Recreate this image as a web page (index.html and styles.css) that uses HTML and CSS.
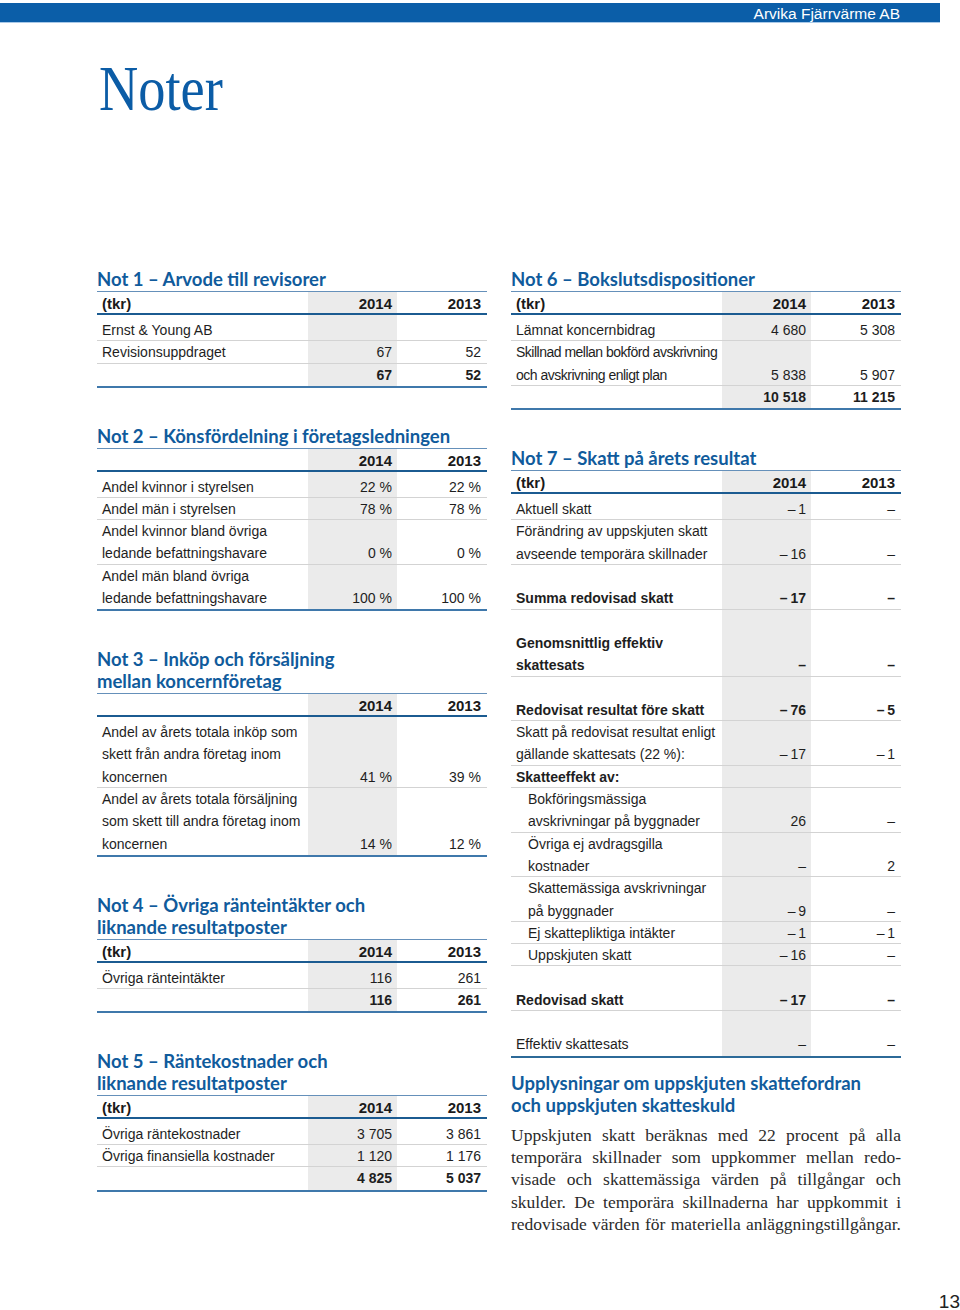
FILE: index.html
```html
<!DOCTYPE html>
<html lang="sv">
<head>
<meta charset="utf-8">
<title>Noter – Arvika Fjärrvärme AB</title>
<link rel="stylesheet" href="styles.css">
</head>
<body>
<header class="topbar"><span class="company">Arvika Fjärrvärme AB</span></header>
<h1 class="title">Noter</h1>
<main class="cols">
  <div class="col">
    <section class="note">
      <h2>Not 1 – Arvode till revisorer</h2>
      <table class="nt">
        <colgroup><col class="c-l"><col class="c-a"><col class="c-b"></colgroup>
        <thead><tr><th class="l">(tkr)</th><th class="a">2014</th><th class="b">2013</th></tr></thead>
        <tbody>
          <tr class="sp"><td></td><td class="a"></td><td></td></tr>
          <tr><td class="l">Ernst &amp; Young AB</td><td class="a"></td><td class="b"></td></tr>
          <tr><td class="l">Revisionsuppdraget</td><td class="a">67</td><td class="b">52</td></tr>
          <tr class="bold"><td class="l">&nbsp;</td><td class="a">67</td><td class="b">52</td></tr>
        </tbody>
      </table>
    </section>

    <section class="note">
      <h2>Not 2 – Könsfördelning i företagsledningen</h2>
      <table class="nt">
        <colgroup><col class="c-l"><col class="c-a"><col class="c-b"></colgroup>
        <thead><tr><th class="l"></th><th class="a">2014</th><th class="b">2013</th></tr></thead>
        <tbody>
          <tr class="sp"><td></td><td class="a"></td><td></td></tr>
          <tr><td class="l">Andel kvinnor i styrelsen</td><td class="a">22 %</td><td class="b">22 %</td></tr>
          <tr><td class="l">Andel män i styrelsen</td><td class="a">78 %</td><td class="b">78 %</td></tr>
          <tr><td class="l">Andel kvinnor bland övriga<br>ledande befattningshavare</td><td class="a">0 %</td><td class="b">0 %</td></tr>
          <tr><td class="l">Andel män bland övriga<br>ledande befattningshavare</td><td class="a">100 %</td><td class="b">100 %</td></tr>
        </tbody>
      </table>
    </section>

    <section class="note">
      <h2>Not 3 – Inköp och försäljning<br>mellan koncernföretag</h2>
      <table class="nt">
        <colgroup><col class="c-l"><col class="c-a"><col class="c-b"></colgroup>
        <thead><tr><th class="l"></th><th class="a">2014</th><th class="b">2013</th></tr></thead>
        <tbody>
          <tr class="sp"><td></td><td class="a"></td><td></td></tr>
          <tr><td class="l">Andel av årets totala inköp som<br>skett från andra företag inom<br>koncernen</td><td class="a">41 %</td><td class="b">39 %</td></tr>
          <tr><td class="l">Andel av årets totala försäljning<br>som skett till andra företag inom<br>koncernen</td><td class="a">14 %</td><td class="b">12 %</td></tr>
        </tbody>
      </table>
    </section>

    <section class="note">
      <h2>Not 4 – Övriga ränteintäkter och<br>liknande resultatposter</h2>
      <table class="nt">
        <colgroup><col class="c-l"><col class="c-a"><col class="c-b"></colgroup>
        <thead><tr><th class="l">(tkr)</th><th class="a">2014</th><th class="b">2013</th></tr></thead>
        <tbody>
          <tr class="sp"><td></td><td class="a"></td><td></td></tr>
          <tr><td class="l">Övriga ränteintäkter</td><td class="a">116</td><td class="b">261</td></tr>
          <tr class="bold"><td class="l">&nbsp;</td><td class="a">116</td><td class="b">261</td></tr>
        </tbody>
      </table>
    </section>

    <section class="note">
      <h2>Not 5 – Räntekostnader och<br>liknande resultatposter</h2>
      <table class="nt">
        <colgroup><col class="c-l"><col class="c-a"><col class="c-b"></colgroup>
        <thead><tr><th class="l">(tkr)</th><th class="a">2014</th><th class="b">2013</th></tr></thead>
        <tbody>
          <tr class="sp"><td></td><td class="a"></td><td></td></tr>
          <tr><td class="l">Övriga räntekostnader</td><td class="a">3 705</td><td class="b">3 861</td></tr>
          <tr><td class="l">Övriga finansiella kostnader</td><td class="a">1 120</td><td class="b">1 176</td></tr>
          <tr class="bold"><td class="l">&nbsp;</td><td class="a">4 825</td><td class="b">5 037</td></tr>
        </tbody>
      </table>
    </section>
  </div>

  <div class="col col-r">
    <section class="note">
      <h2>Not 6 – Bokslutsdispositioner</h2>
      <table class="nt">
        <colgroup><col class="c-l"><col class="c-a"><col class="c-b"></colgroup>
        <thead><tr><th class="l">(tkr)</th><th class="a">2014</th><th class="b">2013</th></tr></thead>
        <tbody>
          <tr class="sp"><td></td><td class="a"></td><td></td></tr>
          <tr><td class="l">Lämnat koncernbidrag</td><td class="a">4 680</td><td class="b">5 308</td></tr>
          <tr><td class="l tight">Skillnad mellan bokförd avskrivning<br>och avskrivning enligt plan</td><td class="a">5 838</td><td class="b">5 907</td></tr>
          <tr class="bold"><td class="l">&nbsp;</td><td class="a">10 518</td><td class="b">11 215</td></tr>
        </tbody>
      </table>
    </section>

    <section class="note">
      <h2>Not 7 – Skatt på årets resultat</h2>
      <table class="nt nt-dark">
        <colgroup><col class="c-l"><col class="c-a"><col class="c-b"></colgroup>
        <thead><tr><th class="l">(tkr)</th><th class="a">2014</th><th class="b">2013</th></tr></thead>
        <tbody>
          <tr class="sp"><td></td><td class="a"></td><td></td></tr>
          <tr><td class="l">Aktuell skatt</td><td class="a">–&#8201;1</td><td class="b">–</td></tr>
          <tr><td class="l">Förändring av uppskjuten skatt<br>avseende temporära skillnader</td><td class="a">–&#8201;16</td><td class="b">–</td></tr>
          <tr class="n"><td class="l">&nbsp;</td><td class="a"></td><td class="b"></td></tr>
          <tr class="bold"><td class="l">Summa redovisad skatt</td><td class="a">–&#8201;17</td><td class="b">–</td></tr>
          <tr class="n"><td class="l">&nbsp;</td><td class="a"></td><td class="b"></td></tr>
          <tr class="bold"><td class="l">Genomsnittlig effektiv<br>skattesats</td><td class="a">–</td><td class="b">–</td></tr>
          <tr class="n"><td class="l">&nbsp;</td><td class="a"></td><td class="b"></td></tr>
          <tr class="bold"><td class="l">Redovisat resultat före skatt</td><td class="a">–&#8201;76</td><td class="b">–&#8201;5</td></tr>
          <tr><td class="l">Skatt på redovisat resultat enligt<br>gällande skattesats (22 %):</td><td class="a">–&#8201;17</td><td class="b">–&#8201;1</td></tr>
          <tr class="bold"><td class="l">Skatteeffekt av:</td><td class="a"></td><td class="b"></td></tr>
          <tr><td class="l ind">Bokföringsmässiga<br>avskrivningar på byggnader</td><td class="a">26</td><td class="b">–</td></tr>
          <tr><td class="l ind">Övriga ej avdragsgilla<br>kostnader</td><td class="a">–</td><td class="b">2</td></tr>
          <tr><td class="l ind">Skattemässiga avskrivningar<br>på byggnader</td><td class="a">–&#8201;9</td><td class="b">–</td></tr>
          <tr><td class="l ind">Ej skattepliktiga intäkter</td><td class="a">–&#8201;1</td><td class="b">–&#8201;1</td></tr>
          <tr><td class="l ind">Uppskjuten skatt</td><td class="a">–&#8201;16</td><td class="b">–</td></tr>
          <tr class="n"><td class="l">&nbsp;</td><td class="a"></td><td class="b"></td></tr>
          <tr class="bold"><td class="l">Redovisad skatt</td><td class="a">–&#8201;17</td><td class="b">–</td></tr>
          <tr class="n"><td class="l">&nbsp;</td><td class="a"></td><td class="b"></td></tr>
          <tr><td class="l">Effektiv skattesats</td><td class="a">–</td><td class="b">–</td></tr>
        </tbody>
      </table>
    </section>

    <section class="info">
      <h2>Upplysningar om uppskjuten skattefordran<br>och uppskjuten skatteskuld</h2>
      <p class="body-text">
        <span class="ln">Uppskjuten skatt beräknas med 22 procent på alla</span>
        <span class="ln">temporära skillnader som uppkommer mellan redo-</span>
        <span class="ln">visade och skattemässiga värden på tillgångar och</span>
        <span class="ln">skulder. De temporära skillnaderna har uppkommit i</span>
        <span class="ln">redovisade värden för materiella anläggningstillgångar.</span>
      </p>
    </section>
  </div>
</main>
<footer class="pageno">13</footer>
</body>
</html>
```

FILE: styles.css
```css
* { box-sizing: border-box; }

html, body { margin: 0; padding: 0; }

body {
  width: 960px;
  height: 1310px;
  overflow: hidden;
  display: flex;
  flex-direction: column;
  background: #ffffff;
  font-family: "Liberation Sans", Arial, sans-serif;
  color: #1e1e1e;
}

/* Top bar */
.topbar {
  margin-top: 3px;
  width: 940px;
  height: 20px;
  background: #0b5ea8;
  border-bottom: 1px solid #a9c9e8;
  text-align: right;
  padding-right: 40px;
}
.company {
  display: block;
  color: #ffffff;
  font-size: 15.5px;
  line-height: 19px;
  padding-top: 1px;
}

/* Page title */
.title {
  margin: 34px 0 0 99px;
  width: max-content;
  font-family: "Liberation Serif", "Times New Roman", serif;
  font-weight: 400;
  font-size: 64px;
  line-height: 64px;
  color: #0b5ca6;
  transform: scaleX(0.85);
  transform-origin: left center;
}

/* Columns */
.cols {
  display: grid;
  grid-template-columns: 390px 390px;
  column-gap: 24px;
  align-items: start;
  margin: 147px 0 0 97px;
}

.note + .note { margin-top: 36.7px; }
.col-r .note + .note { margin-top: 37px; }
.info { margin-top: 14px; }

h2 {
  margin: 0 0 1px;
  font-family: Lato, "Open Sans", sans-serif;
  font-weight: 700;
  font-size: 18.5px;
  line-height: 22px;
  color: #105b9c;
}

/* Note tables */
.nt {
  width: 390px;
  table-layout: fixed;
  border-collapse: separate;
  border-spacing: 0;
  border-top: 1px solid #6590ba;
  border-bottom: 2px solid #3f78ab;
  font-size: 14px;
}
.nt-dark { border-bottom-color: #2c6a98; }

.c-l { width: 211px; }
.c-a { width: 89px; }
.c-b { width: 90px; }

.nt th {
  font-size: 15px;
  font-weight: 700;
  line-height: 19px;
  height: 21px;
  padding: 2px 5px 0;
  text-align: right;
  border-bottom: 2px solid #1b5b91;
  color: #1a1a1a;
}
.nt th.l { text-align: left; }

.nt td {
  line-height: 22.3px;
  padding: 0 5px;
  vertical-align: bottom;
  white-space: nowrap;
  text-align: right;
  background-image: linear-gradient(#d3d3d3, #d3d3d3);
  background-repeat: no-repeat;
  background-size: 100% 1px;
  background-position: left bottom;
}
.nt td.l { text-align: left; }
.nt td.ind { padding-left: 17px; }
.nt td.tight { letter-spacing: -0.5px; }
.nt .b { padding-right: 6px; }
.nt .a { background-color: #ebebeb; }

.nt tr.n td,
.nt tbody tr:last-child td { background-image: none; }

.nt tr.sp td {
  height: 4px;
  line-height: 0;
  padding: 0;
  background-image: none;
}

.nt tr.bold td { font-weight: 700; }

/* Body text */
.body-text {
  margin: 8px 0 0;
  width: 390px;
  font-family: "Liberation Serif", "Times New Roman", serif;
  font-size: 17.5px;
  line-height: 22.3px;
  color: #2b2b2b;
}
.ln {
  display: block;
  text-align: justify;
  text-align-last: justify;
}

/* Page number */
.pageno {
  margin-top: auto;
  text-align: right;
  font-size: 19px;
  line-height: 16px;
  color: #222222;
}
```
